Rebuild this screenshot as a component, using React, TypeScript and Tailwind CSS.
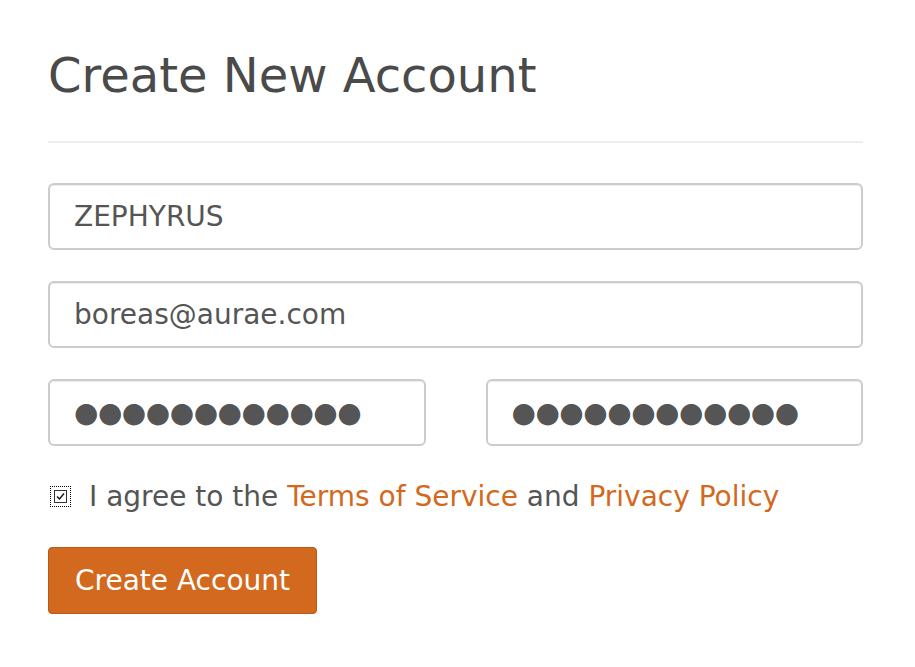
import React from "react";

const font = { fontFamily: '"DejaVu Sans", sans-serif' };

const inputCls =
  "w-full h-[67px] rounded-[6px] border-2 border-[#cccccc] bg-white px-[24px] text-[28px] text-[#555555] outline-none shadow-[inset_0_1px_1px_rgba(0,0,0,0.075)]";

const dots = "●●●●●●●●●●●●";

const App = () => {
  return (
    <div className="min-h-screen bg-white pl-[48px] pr-[52px] pt-[40px] text-[#555555]" style={font}>
      <h1 className="text-[48px] leading-[70px] font-normal text-[#4a4a4a]">Create New Account</h1>
      <hr className="mt-[31px] mb-[40px] border-t-2 border-[#eeeeee]" />
      <form className="flex flex-col gap-[31px]" onSubmit={(e) => e.preventDefault()}>
        <input className={inputCls} defaultValue="ZEPHYRUS" style={font} />
        <input className={inputCls} defaultValue="boreas@aurae.com" style={font} />
        <div className="grid grid-cols-2 gap-[60px]">
          <input className={`${inputCls} tracking-[-0.5px]`} defaultValue={dots} aria-label="Password" style={font} />
          <input
            className={`${inputCls} tracking-[-0.5px]`}
            defaultValue={dots}
            aria-label="Confirm password"
            style={font}
          />
        </div>
        <label className="flex items-center gap-[18px] pl-[2px] text-[28px] leading-[39px]">
          <span className="flex h-[21px] w-[21px] items-center justify-center border border-dotted border-black">
            <svg width="13" height="13" viewBox="0 0 13 13">
              <rect x="0.5" y="0.5" width="12" height="12" fill="white" stroke="#333" />
              <path d="M3 6.5 L5.5 9 L10 3.5" fill="none" stroke="#111" strokeWidth="1.4" />
            </svg>
          </span>
          <span>
            I agree to the <a href="#" className="text-[#d2691e]">Terms of Service</a> and{" "}
            <a href="#" className="text-[#d2691e]">Privacy Policy</a>
          </span>
        </label>
        <div>
          <button
            type="submit"
            className="h-[67px] rounded-[4px] border border-[#b85a17] bg-[#d2691e] px-[26px] text-[28px] text-white"
            style={font}
          >
            Create Account
          </button>
        </div>
      </form>
    </div>
  );
};

export default App;
